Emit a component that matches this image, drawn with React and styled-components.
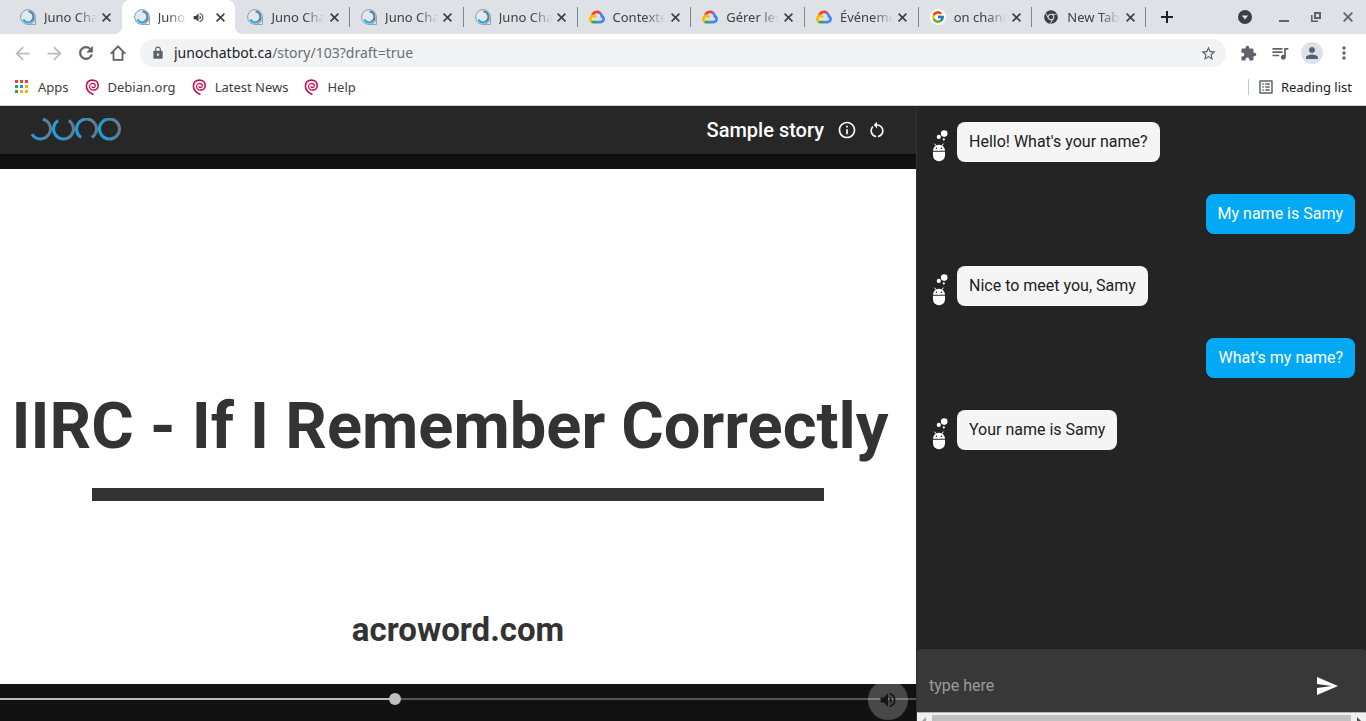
import React, { useState } from "react";
import styled, { createGlobalStyle, css } from "styled-components";
import {
  MdArrowBack,
  MdArrowForward,
  MdExtension,
  MdInfoOutline,
  MdListAlt,
  MdLock,
  MdMoreVert,
  MdPerson,
  MdQueueMusic,
  MdRestartAlt,
  MdSend,
  MdStarBorder,
  MdVolumeUp,
} from "react-icons/md";
import { FaChrome } from "react-icons/fa";
import { FcGoogle } from "react-icons/fc";

const GlobalStyle = createGlobalStyle`
  *, *::before, *::after { box-sizing: border-box; }
  html, body { margin: 0; height: 100%; }
  body { overflow: hidden; background: #fff; }
  #root { height: 100%; }
  button { border: 0; padding: 0; background: none; color: inherit; font: inherit; cursor: pointer; }
  svg { display: block; flex: none; }
`;

const uiFont = css`
  font-family: "Noto Sans", "Open Sans", sans-serif;
`;

const Window = styled.div`
  display: flex;
  flex-direction: column;
  height: 100%;
`;

/* Browser chrome */

const Chrome = styled.header`
  ${uiFont}
  flex: none;
  font-size: 13px;
  color: #3c4043;
  border-bottom: 1px solid #d0d3d1;
`;

const TabStrip = styled.div`
  display: flex;
  height: 34px;
  padding-left: 8px;
  background: #dee1e6;
`;

const TabList = styled.ul`
  display: flex;
  flex: 1;
  min-width: 0;
  margin: 0;
  padding: 0;
  list-style: none;
`;

const activeTab = css`
  background: #fff;

  &::before,
  &::after {
    content: "";
    position: absolute;
    bottom: 0;
    width: 8px;
    height: 8px;
  }

  &::before {
    right: 100%;
    background: radial-gradient(circle at 0 0, transparent 8px, #fff 8px);
  }

  &::after {
    left: 100%;
    background: radial-gradient(circle at 100% 0, transparent 8px, #fff 8px);
  }
`;

const tabDivider = css`
  &::after {
    content: "";
    position: absolute;
    right: -1px;
    top: 7px;
    width: 1px;
    height: 20px;
    background: #80868b;
  }
`;

const Tab = styled.li`
  position: relative;
  display: flex;
  align-items: center;
  flex: 1 1 0;
  min-width: 0;
  padding: 0 7px 0 12px;
  border-radius: 8px 8px 0 0;
  ${(p) => p.$active && activeTab}
  ${(p) => p.$divider && tabDivider}
`;

const TabTitle = styled.span`
  flex: 1;
  min-width: 0;
  margin: 0 2px 0 8px;
  overflow: hidden;
  white-space: nowrap;
  line-height: 20px;
  mask-image: linear-gradient(to right, #000 calc(100% - 20px), transparent);
`;

const TabButton = styled.button`
  display: grid;
  place-items: center;
  flex: none;
  width: 16px;
  height: 16px;
  margin-left: ${(p) => (p.$gap ? "6px" : "0")};
`;

const FrameControls = styled.div`
  display: flex;
  align-items: center;
  flex: none;
  width: 221px;
  padding: 0 2px 0 6px;
`;

const FrameButton = styled.button`
  display: grid;
  place-items: center;
  width: 32px;
  height: 32px;
  color: ${(p) => (p.$dark ? "#202124" : "#5f6368")};

  &:nth-child(2) {
    margin: 0 7px 0 auto;
  }
`;

const Toolbar = styled.div`
  display: flex;
  align-items: center;
  height: 38px;
  padding: 0 6px;
`;

const ToolButton = styled.button`
  display: grid;
  place-items: center;
  flex: none;
  width: 32px;
  height: 28px;
  color: ${(p) => (p.$muted ? "#babcbe" : "#5f6368")};
`;

const Avatar = styled.span`
  display: grid;
  place-items: center;
  width: 22px;
  height: 22px;
  border-radius: 50%;
  background: #dee1e6;
  color: #55607a;
`;

const Omnibox = styled.form`
  display: flex;
  align-items: center;
  flex: 1;
  min-width: 0;
  height: 28px;
  margin: 0 6px;
  padding: 0 2px 0 11px;
  border-radius: 14px;
  background: #f1f3f4;
  color: #5f6368;
`;

const Address = styled.a`
  flex: 1;
  min-width: 0;
  margin-left: 9px;
  overflow: hidden;
  white-space: nowrap;
  font-size: 14px;
  line-height: 20px;
  color: #6b6f73;
  text-decoration: none;

  strong {
    font-weight: 400;
    color: #202124;
  }
`;

const BookmarkBar = styled.nav`
  display: flex;
  align-items: center;
  gap: 16px;
  height: 33px;
  padding: 0 14px 4px;
`;

const Bookmark = styled.a`
  display: flex;
  align-items: center;
  gap: 8px;
  line-height: 20px;
  color: inherit;
  text-decoration: none;
`;

const ReadingList = styled.button`
  display: flex;
  align-items: center;
  gap: 6px;
  margin-left: auto;
  color: #202124;

  &::before {
    content: "";
    width: 1px;
    height: 16px;
    margin-right: 2px;
    background: #c4c7ca;
  }

  svg {
    color: #5f6368;
  }
`;

/* Story page */

const Page = styled.main`
  display: grid;
  grid-template-columns: minmax(0, 1fr) 450px;
  flex: 1;
  min-height: 0;
  font-family: Roboto, sans-serif;
`;

const Stage = styled.section`
  display: flex;
  flex-direction: column;
  min-height: 0;
  overflow: hidden;
  background: #121212;
`;

const StoryBar = styled.header`
  display: flex;
  align-items: center;
  flex: none;
  height: 48px;
  padding: 0 24px 0 30px;
  background: #272727;
  box-shadow: 0 2px 4px rgba(0, 0, 0, 0.4);
  color: #fff;
`;

const StoryTitle = styled.h1`
  margin: 0 8px 0 auto;
  font-size: 20px;
  font-weight: 500;
  line-height: 32px;
`;

const BarButton = styled.button`
  display: grid;
  place-items: center;
  width: 30px;
  height: 30px;
`;

const Slide = styled.div`
  display: flex;
  flex-direction: column;
  align-items: center;
  flex: none;
  aspect-ratio: 16 / 9;
  margin-top: 15px;
  padding-top: 219px;
  overflow: hidden;
  background: #fff;
  color: #333;
`;

const Headline = styled.h2`
  margin: 0;
  padding-right: 16px;
  font-size: 65px;
  font-weight: 700;
  line-height: 76px;
  white-space: nowrap;
`;

const Rule = styled.hr`
  width: 80%;
  height: 13px;
  margin: 24px 0 0;
  border: 0;
  background: #333;
`;

const Credit = styled.p`
  margin: 109px 0 0;
  font-size: 33px;
  font-weight: 700;
  line-height: 40px;
`;

const Controls = styled.div`
  position: relative;
  flex: 1;
  min-height: 30px;
`;

const Seek = styled.input`
  display: block;
  appearance: none;
  width: 100%;
  height: 30px;
  margin: 0;
  background: linear-gradient(
      to right,
      #bdbdbd var(--played),
      #555 var(--played)
    )
    center / 100% 2px no-repeat;

  &::-webkit-slider-thumb {
    appearance: none;
    width: 12px;
    height: 12px;
    border-radius: 50%;
    background: #c0c0c0;
  }
`;

const VolumeButton = styled.button`
  position: absolute;
  right: 8px;
  top: -4px;
  display: grid;
  place-items: center;
  width: 40px;
  height: 40px;
  border-radius: 50%;
  background: rgba(255, 255, 255, 0.23);
  color: #161616;
`;

const Chat = styled.aside`
  display: flex;
  flex-direction: column;
  min-height: 0;
  border-left: 1px solid #303030;
  background: #242424;
`;

const Messages = styled.ol`
  display: flex;
  flex-direction: column;
  gap: 32px;
  flex: 1;
  min-height: 0;
  margin: 0;
  padding: 16px 11px 16px 15px;
  overflow: hidden;
  list-style: none;
`;

const Message = styled.li`
  display: flex;
  align-items: flex-end;
  justify-content: ${(p) => (p.$mine ? "flex-end" : "flex-start")};
  gap: 9px;
`;

const Bubble = styled.p`
  margin: 0;
  padding: 8px 12px;
  border-radius: 8px;
  font-size: 16px;
  line-height: 24px;
  background: ${(p) => (p.$mine ? "#03a9f4" : "#f5f5f5")};
  color: ${(p) => (p.$mine ? "#fff" : "#212121")};
`;

const Composer = styled.form`
  display: flex;
  align-items: center;
  flex: none;
  height: 64px;
  padding: 10px 27px 0 12px;
  border-bottom: 1px solid #b5b5b5;
  border-radius: 4px 4px 0 0;
  background: #383838;
  color: #fff;
`;

const ComposerInput = styled.input`
  flex: 1;
  min-width: 0;
  height: 32px;
  padding: 0;
  border: 0;
  outline: 0;
  background: transparent;
  color: #fff;
  font: 16px/24px Roboto, sans-serif;

  &::placeholder {
    color: #9b9b9b;
    opacity: 1;
  }
`;

const ScrollTrack = styled.div`
  display: flex;
  justify-content: space-between;
  flex: none;
  height: 8px;
  padding: 2px 0 0;
  overflow: hidden;
  background: #f1f1f1;
`;

const ScrollThumb = styled.div`
  flex: 1;
  height: 13px;
  background: #c1c1c1;
`;

/* Drawings */

const JunoFavicon = () => (
  <svg width="16" height="16" viewBox="0 0 16 16" fill="none">
    <path d="M8 15.5h7.5V9" stroke="#98a4af" />
    <circle cx="8" cy="8" r="7.4" fill="#e3e8ec" stroke="#8d9aa6" strokeWidth="1" />
    <path d="M8.6 2.6A5.4 5.4 0 0 1 10.6 12.7" stroke="#4b83a6" strokeWidth="2" />
    <path d="M10.8 12.6A5.4 5.4 0 0 1 3.3 10.6" stroke="#20a9e6" strokeWidth="2" />
  </svg>
);

const CloudFavicon = () => (
  <svg width="16" height="16" viewBox="0 -25 256 256">
    <path fill="#EA4335" d="M170.25 56.82l22.25-22.25 1.49-9.37C153.44-11.68 88.98-7.5 52.42 33.92 42.27 45.42 34.73 59.76 30.72 74.57l7.97-1.12 44.5-7.34 3.44-3.51c19.8-21.75 53.27-24.67 76.13-6.17l7.49.39z" />
    <path fill="#4285F4" d="M224.2 73.92c-5.11-18.84-15.61-35.77-30.21-48.72l-31.23 31.23c13.18 10.77 20.7 27.01 20.37 44.04v5.54c15.36 0 27.8 12.45 27.8 27.8s-12.44 27.48-27.8 27.48h-55.67l-5.46 5.93v33.34l5.46 5.24h55.67c39.93.31 72.55-31.5 72.86-71.43.19-24.2-11.74-46.89-31.79-60.45" />
    <path fill="#34A853" d="M71.87 205.8h55.59v-44.51H71.87a27.6 27.6 0 0 1-11.4-2.5l-7.89 2.42-22.4 22.25-1.96 7.58c12.57 9.49 27.9 14.83 43.65 14.76" />
    <path fill="#FBBC05" d="M71.87 61.43C31.94 61.66-.24 94.23 0 134.16c.13 22.3 10.55 43.29 28.22 56.88l32.25-32.25a27.75 27.75 0 1 1 36.78-36.77l32.24-32.25a72.2 72.2 0 0 0-57.62-28.34" />
  </svg>
);

const GoogleBadge = styled.span`
  display: grid;
  place-items: center;
  flex: none;
  width: 16px;
  height: 16px;
  border-radius: 50%;
  background: #fff;
`;

const GoogleFavicon = () => (
  <GoogleBadge>
    <FcGoogle size={14} />
  </GoogleBadge>
);

const ChromeBadge = styled(GoogleBadge)`
  background: none;
`;

const ChromeFavicon = () => (
  <ChromeBadge>
    <FaChrome size={14} color="#3c4043" />
  </ChromeBadge>
);

const CrossIcon = ({ size = 9 }) => (
  <svg width={size} height={size} viewBox="0 0 9 9" fill="none" stroke="currentColor" strokeWidth="1.6">
    <path d="M.6.6l7.8 7.8M8.4.6L.6 8.4" />
  </svg>
);

const PlusIcon = () => (
  <svg width="12" height="12" viewBox="0 0 12 12" fill="none" stroke="currentColor" strokeWidth="2">
    <path d="M6 0v12M0 6h12" />
  </svg>
);

const ReloadIcon = () => (
  <svg width="20" height="20" viewBox="0 0 24 24" fill="currentColor" stroke="currentColor" strokeWidth=".7">
    <path d="M17.65 6.35A7.958 7.958 0 0 0 12 4c-4.42 0-7.99 3.58-7.99 8s3.57 8 7.99 8c3.73 0 6.84-2.55 7.73-6h-2.08A5.99 5.99 0 0 1 12 18c-3.31 0-6-2.69-6-6s2.69-6 6-6c1.66 0 3.14.69 4.22 1.78L13 11h7V4l-2.35 2.35z" />
  </svg>
);

const HomeIcon = () => (
  <svg width="16" height="16" viewBox="0 0 16 16" fill="none" stroke="currentColor" strokeWidth="1.8">
    <path d="M8 1.4L1.8 7.8h1.7v7h9v-7h1.7z" />
  </svg>
);

const DebianSwirl = () => (
  <svg width="15" height="16" viewBox="0 0 15 16" fill="none" stroke="#c70d4b" strokeLinecap="round">
    <path d="M7.8 15.3C4.2 13.6 1.4 10.6 1.4 7 1.4 3.4 4 1.1 7.3 1.1c3.3 0 5.9 1.9 5.9 5.2 0 3.1-2 4.7-4 4.7" strokeWidth="1.6" />
    <path d="M9.2 11C6.4 11.5 4.5 9.7 4.5 7.6c0-1.9 1.4-3.2 3.2-3.2 1.6 0 2.6 1 2.6 2.3 0 1.1-.9 1.9-2.2 1.9-.8 0-1.2-.5-1.2-1.1" strokeWidth="1.1" />
  </svg>
);

const appColors = [
  "#ea4335", "#ea4335", "#ea4335",
  "#34a053", "#1a8cff", "#f4b400",
  "#34a053", "#f4b400", "#f4b400",
];

const AppsIcon = () => (
  <svg width="16" height="16" viewBox="0 0 16 16">
    {appColors.map((fill, i) => (
      <rect key={i} x={1 + (i % 3) * 5} y={1 + Math.floor(i / 3) * 5} width="3" height="3" fill={fill} />
    ))}
  </svg>
);

const DropdownIcon = () => (
  <svg width="14" height="14" viewBox="0 0 14 14">
    <circle cx="7" cy="7" r="7" fill="#3c4043" />
    <path d="M3.8 5.4h6.4L7 9.4z" fill="#dee1e6" />
  </svg>
);

const MinimizeIcon = () => (
  <svg width="10" height="10" viewBox="0 0 10 10">
    <path d="M0 8h10v2H0z" fill="currentColor" />
  </svg>
);

const RestoreIcon = () => (
  <svg width="10" height="10" viewBox="0 0 10 10" fill="none" stroke="currentColor">
    <path d="M4 1h5v5H4z" strokeWidth="2" />
    <path d="M.8 3v6.2H7" strokeWidth="1.6" />
  </svg>
);

const JunoLogo = () => (
  <svg width="92" height="24" viewBox="0 1 92 24" fill="none" strokeWidth="3" role="img" aria-label="Juno">
    <defs>
      {[10.5, 33.5, 56.5, 79.5].map((cx, i) => (
        <linearGradient key={cx} id={`ring${i}`} gradientUnits="userSpaceOnUse" x1={cx - 11} x2={cx + 9} y1="14" y2="10">
          <stop offset="0" stopColor="#12a6e6" />
          <stop offset="1" stopColor="#647a90" />
        </linearGradient>
      ))}
    </defs>
    <path d="M12.7 2.2A10 10 0 1 1 2 17.3" stroke="url(#ring0)" />
    <path d="M28.2 3.5A10 10 0 1 0 38.8 3.5" stroke="url(#ring1)" />
    <path d="M51.2 20.5A10 10 0 1 1 61.8 20.5" stroke="url(#ring2)" />
    <circle cx="79.5" cy="12" r="10" stroke="url(#ring3)" />
  </svg>
);

const BotIcon = () => (
  <svg width="16" height="32" viewBox="0 1 16 32" fill="#fff">
    <circle cx="12.2" cy="4.6" r="3.3" />
    <circle cx="6.8" cy="7.9" r="2.1" />
    <circle cx="11.8" cy="10.4" r="1.1" />
    <path d="M2.4 14.6l2 2.4M11.6 14.6l-2 2.4" stroke="#fff" strokeWidth="1" />
    <path d="M1 21.8a6 6 0 0 1 12 0z" />
    <path d="M1 22.8h12v3.4a6 6 0 0 1-12 0z" />
    <circle cx="4.5" cy="19.2" r=".8" fill="#242424" />
    <circle cx="9.5" cy="19.2" r=".8" fill="#242424" />
  </svg>
);

const ScrollArrow = ({ flip }) => (
  <svg width="15" height="13" viewBox="0 0 15 13">
    <path d={flip ? "M6 2l4 4-4 4z" : "M9 2L5 6l4 4z"} fill={flip ? "#505050" : "#a3a3a3"} />
  </svg>
);

const tabs = [
  { title: "Juno Chatbot", Icon: JunoFavicon },
  { title: "Juno Chatbot", Icon: JunoFavicon, active: true },
  { title: "Juno Chatbot", Icon: JunoFavicon },
  { title: "Juno Chatbot", Icon: JunoFavicon },
  { title: "Juno Chatbot", Icon: JunoFavicon },
  { title: "Contextes", Icon: CloudFavicon },
  { title: "Gérer les", Icon: CloudFavicon },
  { title: "Événements", Icon: CloudFavicon },
  { title: "on change", Icon: GoogleFavicon },
  { title: "New Tab", Icon: ChromeFavicon },
];

const messages = [
  { text: "Hello! What's your name?" },
  { text: "My name is Samy", mine: true },
  { text: "Nice to meet you, Samy" },
  { text: "What's my name?", mine: true },
  { text: "Your name is Samy" },
];

const bookmarks = ["Debian.org", "Latest News", "Help"];

export default function App() {
  const [position, setPosition] = useState(43);

  return (
    <Window>
      <GlobalStyle />
      <Chrome>
        <TabStrip>
          <TabList>
            {tabs.map(({ title, Icon, active }, i) => (
              <Tab key={i} $active={active} $divider={i > 1}>
                <Icon />
                <TabTitle>{title}</TabTitle>
                {active && (
                  <TabButton aria-label="Mute tab">
                    <MdVolumeUp size={13} />
                  </TabButton>
                )}
                <TabButton aria-label="Close tab" $gap={active}>
                  <CrossIcon />
                </TabButton>
              </Tab>
            ))}
          </TabList>
          <FrameControls>
            <FrameButton $dark aria-label="New tab"><PlusIcon /></FrameButton>
            <FrameButton aria-label="Search tabs"><DropdownIcon /></FrameButton>
            <FrameButton aria-label="Minimize"><MinimizeIcon /></FrameButton>
            <FrameButton aria-label="Restore"><RestoreIcon /></FrameButton>
            <FrameButton aria-label="Close window"><CrossIcon size={10} /></FrameButton>
          </FrameControls>
        </TabStrip>

        <Toolbar>
          <ToolButton $muted aria-label="Back"><MdArrowBack size={21} /></ToolButton>
          <ToolButton $muted aria-label="Forward"><MdArrowForward size={21} /></ToolButton>
          <ToolButton aria-label="Reload"><ReloadIcon /></ToolButton>
          <ToolButton aria-label="Home"><HomeIcon /></ToolButton>
          <Omnibox>
            <MdLock size={14} />
            <Address href="#story"><strong>junochatbot.ca</strong>/story/103?draft=true</Address>
            <ToolButton type="button" aria-label="Bookmark this tab"><MdStarBorder size={17} /></ToolButton>
          </Omnibox>
          <ToolButton aria-label="Extensions"><MdExtension size={17} /></ToolButton>
          <ToolButton aria-label="Media"><MdQueueMusic size={20} /></ToolButton>
          <ToolButton aria-label="Profile"><Avatar><MdPerson size={18} /></Avatar></ToolButton>
          <ToolButton aria-label="Menu"><MdMoreVert size={20} /></ToolButton>
        </Toolbar>

        <BookmarkBar>
          <Bookmark href="#apps"><AppsIcon />Apps</Bookmark>
          {bookmarks.map((name) => (
            <Bookmark key={name} href="#bookmark">
              <DebianSwirl />
              {name}
            </Bookmark>
          ))}
          <ReadingList><MdListAlt size={18} />Reading list</ReadingList>
        </BookmarkBar>
      </Chrome>

      <Page>
        <Stage>
          <StoryBar>
            <JunoLogo />
            <StoryTitle>Sample story</StoryTitle>
            <BarButton aria-label="About this story"><MdInfoOutline size={20} /></BarButton>
            <BarButton aria-label="Restart"><MdRestartAlt size={20} /></BarButton>
          </StoryBar>
          <Slide>
            <Headline>IIRC - If I Remember Correctly</Headline>
            <Rule />
            <Credit>acroword.com</Credit>
          </Slide>
          <Controls>
            <Seek
              type="range"
              min="0"
              max="100"
              aria-label="Seek"
              value={position}
              onChange={(e) => setPosition(Number(e.target.value))}
              style={{ "--played": `${position}%` }}
            />
            <VolumeButton aria-label="Volume"><MdVolumeUp size={20} /></VolumeButton>
          </Controls>
        </Stage>

        <Chat>
          <Messages>
            {messages.map(({ text, mine }) => (
              <Message key={text} $mine={mine}>
                {!mine && <BotIcon />}
                <Bubble $mine={mine}>{text}</Bubble>
              </Message>
            ))}
          </Messages>
          <Composer onSubmit={(e) => e.preventDefault()}>
            <ComposerInput type="text" placeholder="type here" aria-label="Message" />
            <button type="submit" aria-label="Send"><MdSend size={24} /></button>
          </Composer>
          <ScrollTrack>
            <ScrollArrow />
            <ScrollThumb />
            <ScrollArrow flip />
          </ScrollTrack>
        </Chat>
      </Page>
    </Window>
  );
}
